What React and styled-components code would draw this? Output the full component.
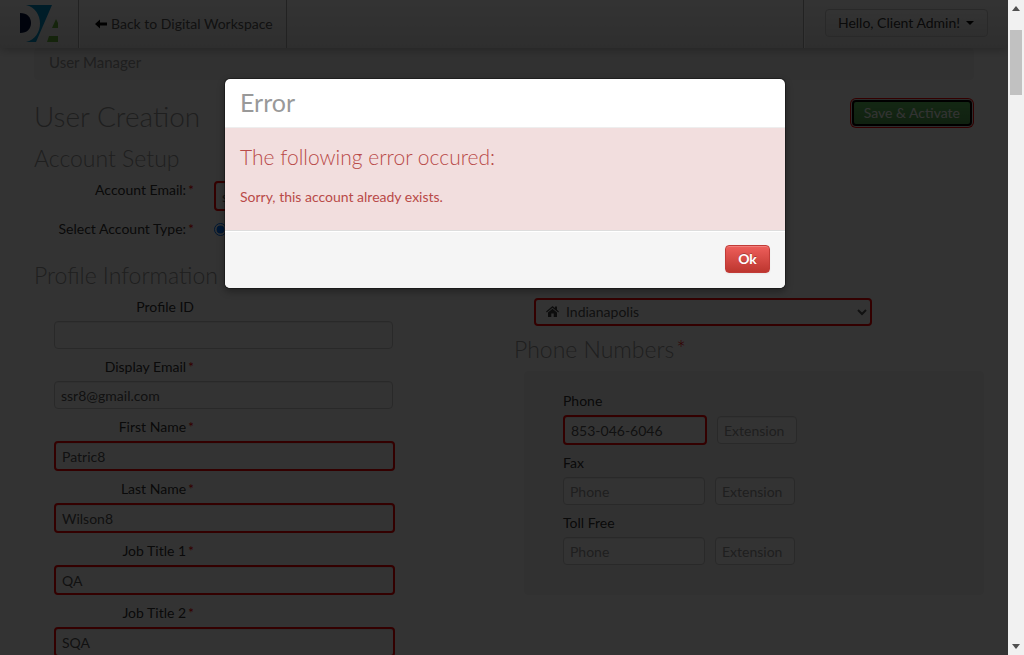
import React from "react";
import styled, { createGlobalStyle, css } from "styled-components";

const GlobalStyle = createGlobalStyle`
  * { box-sizing: border-box; }
  body {
    margin: 0;
    background: #fff;
    color: #333;
    font: 14px/20px Lato, "Liberation Sans", sans-serif;
    overflow: hidden;
  }
  input, select, button { font: inherit; color: inherit; }
  h1, h2, h3, p, ul { margin: 0; padding: 0; }
`;

const Shell = styled.div`
  display: grid;
  grid-template-columns: minmax(0, 1fr) 16px;
  height: 100vh;
`;

const Viewport = styled.div`
  position: relative;
  overflow: hidden;
`;

const ScrollTrack = styled.div`
  display: flex;
  flex-direction: column;
  align-items: center;
  background: #f1f1f1;
  padding: 6px 0;
`;

const ScrollThumb = styled.div`
  width: 12px;
  height: 65px;
  margin: 19px 0 auto;
  background: #c1c1c1;
`;

const ScrollArrow = styled.svg`
  width: 8px;
  height: 5px;
  fill: #505050;
`;

const Navbar = styled.header`
  display: flex;
  align-items: stretch;
  height: 48px;
  background: linear-gradient(#fff, #e6e6e6);
  box-shadow: 0 1px 10px rgba(0, 0, 0, 0.3);
  position: relative;
`;

const Brand = styled.a`
  display: flex;
  padding: 4px 19px;
  width: 78px;
`;

const navDivider = css`
  border-left: 1px solid #aaa;
  box-shadow: inset 1px 0 #fff;
`;

const BackLink = styled.a`
  display: flex;
  align-items: center;
  gap: 4px;
  padding: 0 13px 0 16px;
  color: #555;
  text-decoration: none;
  ${navDivider}
  border-right: 1px solid #aaa;
`;

const UserArea = styled.div`
  display: flex;
  align-items: center;
  margin-left: auto;
  padding: 0 20px 2px 21px;
  ${navDivider}
`;

const UserButton = styled.button`
  display: flex;
  align-items: center;
  gap: 6px;
  height: 28px;
  padding: 0 13px 0 12px;
  color: #333;
  background: linear-gradient(#fff, #e6e6e6);
  border: 1px solid #ccc;
  border-radius: 4px;
`;

const Caret = styled.span`
  border: 4px solid transparent;
  border-top-color: #000;
  border-bottom: 0;
`;

const Page = styled.main`
  max-width: 940px;
  margin: 0 auto;
`;

const Breadcrumb = styled.nav`
  padding: 4px 15px 7px;
  background: #f5f5f5;
  border-radius: 4px;
  a { color: #999; font-size: 15px; text-decoration: none; }
`;

const TitleRow = styled.div`
  display: flex;
  justify-content: space-between;
  align-items: flex-start;
  padding: 16px 2px 3px 0;
`;

const PageTitle = styled.h1`
  font-size: 28px;
  line-height: 40px;
  font-weight: 300;
  color: #999;
`;

const SectionTitle = styled.h2`
  margin-bottom: 3px;
  font-size: 23px;
  line-height: 38px;
  font-weight: 300;
  color: #999;
`;

const Required = styled.span`
  color: #f00;
  margin-left: 2px;
`;

const SaveButton = styled.button`
  height: 26px;
  margin-top: 4px;
  padding: 0 10px;
  color: #fff;
  line-height: 20px;
  background: linear-gradient(#62c462, #51a351);
  border: 2px solid #000;
  border-radius: 4px;
  box-shadow: 0 0 0 1px #ddd, 0 0 0 2px #f00;
`;

const Setup = styled.div`
  display: grid;
  gap: 7px;
  padding-bottom: 5px;
`;

const SetupRow = styled.div`
  display: grid;
  grid-template-columns: 160px 1fr;
  align-items: start;
  column-gap: 20px;
  height: 32px;
  label { text-align: right; }
  input[type="text"] { margin-top: 1px; }
`;

const TextInput = styled.input.attrs({ type: "text" })`
  display: block;
  width: ${(p) => (p.$invalid ? p.$w + 2 : p.$w)}px;
  height: ${(p) => (p.$invalid ? 30 : 28)}px;
  padding: 4px 6px;
  color: #555;
  background: #fff;
  border: ${(p) => (p.$invalid ? "2px solid #f00" : "1px solid #ccc")};
  border-radius: 4px;
  box-shadow: inset 0 1px 1px rgba(0, 0, 0, 0.075);
  &::placeholder { color: #999; opacity: 1; }
`;

const Radio = styled.input`
  width: 13px;
  height: 13px;
  margin: 4px 0 0;
`;

const Columns = styled.div`
  display: grid;
  grid-template-columns: 480px 1fr;
  align-items: start;
`;

const ProfileFields = styled.div`
  padding-left: 20px;
`;

const Field = styled.div`
  margin-bottom: 8px;
  label { display: block; margin-bottom: 4px; }
`;

const ProfileLabel = styled.label`
  width: 140px;
  text-align: right;
`;

const RightColumn = styled.div`
  padding-top: 42px;
`;

const OfficePicker = styled.div`
  position: relative;
  width: 338px;
  margin: 0 0 4px 20px;
  svg { position: absolute; left: 12px; top: 8px; }
`;

const Select = styled.select`
  display: block;
  width: 100%;
  height: 28px;
  padding: 0 0 2px 26px;
  color: #555;
  background: #fff;
  border: 2px solid #f00;
  border-radius: 4px;
`;

const Well = styled.div`
  margin: 0 -10px 0 10px;
  padding: 20px 39px 22px;
  background: #f5f5f5;
  border-radius: 4px;
`;

const PhoneInputs = styled.div`
  display: flex;
  align-items: center;
  gap: 10px;
`;

const Backdrop = styled.div`
  position: absolute;
  inset: 0;
  display: flex;
  justify-content: center;
  align-items: flex-start;
  padding: 78px 0 0 2px;
  background: rgba(0, 0, 0, 0.8);
`;

const Modal = styled.section`
  width: 562px;
  border: 1px solid rgba(0, 0, 0, 0.3);
  border-radius: 6px;
  background: #fff;
  background-clip: padding-box;
  box-shadow: 0 3px 7px rgba(0, 0, 0, 0.3);
  overflow: hidden;
`;

const ModalHeader = styled.header`
  padding: 8px 15px 10px;
  border-bottom: 1px solid #eee;
  h2 { font-size: 25px; line-height: 30px; font-weight: 400; color: #999; }
`;

const ModalBody = styled.div`
  padding: 9px 15px 23px;
  background: #f2dede;
  color: #b94a48;
  h3 { font-size: 21px; line-height: 40px; font-weight: 300; }
  p { margin-top: 10px; }
`;

const ModalFooter = styled.footer`
  display: flex;
  justify-content: flex-end;
  padding: 14px 15px 15px;
  background: #f5f5f5;
  border-top: 1px solid #ddd;
  box-shadow: inset 0 1px 0 #fff;
`;

const OkButton = styled.button`
  height: 28px;
  width: 45px;
  padding: 0;
  color: #fff;
  font-weight: 700;
  text-shadow: 0 -1px 0 rgba(0, 0, 0, 0.25);
  background: linear-gradient(#ee5f5b, #bd362f);
  border: 1px solid #c13b37;
  border-radius: 4px;
  box-shadow: inset 0 1px 0 rgba(255, 255, 255, 0.2), 0 1px 2px rgba(0, 0, 0, 0.05);
`;

const profile = [
  { id: "profileId", label: "Profile ID", value: "" },
  { id: "displayEmail", label: "Display Email", value: "ssr8@gmail.com", required: true },
  { id: "firstName", label: "First Name", value: "Patric8", required: true, invalid: true },
  { id: "lastName", label: "Last Name", value: "Wilson8", required: true, invalid: true },
  { id: "job1", label: "Job Title 1", value: "QA", required: true, invalid: true },
  { id: "job2", label: "Job Title 2", value: "SQA", required: true, invalid: true },
];

const phones = [
  { id: "phone", label: "Phone", value: "853-046-6046", invalid: true },
  { id: "fax", label: "Fax", value: "" },
  { id: "tollFree", label: "Toll Free", value: "" },
];

function Logo() {
  return (
    <svg width="40" height="40" viewBox="0 0 40 40" role="img" aria-label="DA">
      <path d="M1 9C8 9 12 13 12 19S8 29 1 29z" fill="#00103c" />
      <path d="M7 1h26L17 38H7C16 36 21 28 21 19.5S16 3 7 1z" fill="#0090c8" />
      <path d="M37 15l2 4v5h-6z M30 32h9v6H28z" fill="#6ab43c" />
    </svg>
  );
}

function ArrowLeftIcon() {
  return (
    <svg width="12" height="10" viewBox="0 0 12 10" aria-hidden="true">
      <path d="M0 5l5-4.5v3h7v3H5v3z" fill="#000" />
    </svg>
  );
}

function HomeIcon() {
  return (
    <svg width="13" height="11" viewBox="0 0 13 11" aria-hidden="true">
      <path d="M6.5 0L9 2.1V.6h2v3.2l2 1.7-.8.9L6.5 1.7.8 6.4 0 5.5z" fill="#444" />
      <path d="M6.5 2.7l4.5 3.7V11H7.7V7.6H5.3V11H2V6.4z" fill="#444" />
    </svg>
  );
}

export default function App() {
  return (
    <Shell>
      <GlobalStyle />
      <Viewport>
        <Navbar>
          <Brand href="#home"><Logo /></Brand>
          <BackLink href="#workspace"><ArrowLeftIcon />Back to Digital Workspace</BackLink>
          <UserArea>
            <UserButton type="button">Hello, Client Admin! <Caret /></UserButton>
          </UserArea>
        </Navbar>
        <Page>
          <Breadcrumb><a href="#users">User Manager</a></Breadcrumb>
          <TitleRow>
            <PageTitle>User Creation</PageTitle>
            <SaveButton type="button">Save &amp; Activate</SaveButton>
          </TitleRow>
          <SectionTitle>Account Setup</SectionTitle>
          <Setup>
            <SetupRow>
              <label htmlFor="email">Account Email:<Required>*</Required></label>
              <TextInput id="email" $w={339} $invalid defaultValue="ssr8@gmail.com" />
            </SetupRow>
            <SetupRow>
              <label htmlFor="type">Select Account Type:<Required>*</Required></label>
              <Radio id="type" type="radio" defaultChecked />
            </SetupRow>
          </Setup>
          <Columns>
            <div>
              <SectionTitle>Profile Information</SectionTitle>
              <ProfileFields>
                {profile.map((f) => (
                  <Field key={f.id}>
                    <ProfileLabel htmlFor={f.id}>{f.label}{f.required && <Required>*</Required>}</ProfileLabel>
                    <TextInput id={f.id} $w={339} $invalid={f.invalid} defaultValue={f.value} />
                  </Field>
                ))}
              </ProfileFields>
            </div>
            <RightColumn>
              <OfficePicker>
                <Select aria-label="Office" defaultValue="ind"><option value="ind">Indianapolis</option></Select>
                <HomeIcon />
              </OfficePicker>
              <SectionTitle>Phone Numbers<Required>*</Required></SectionTitle>
              <Well>
                {phones.map((f) => (
                  <Field key={f.id}>
                    <label htmlFor={f.id}>{f.label}</label>
                    <PhoneInputs>
                      <TextInput id={f.id} $w={142} $invalid={f.invalid} placeholder="Phone" defaultValue={f.value} />
                      <TextInput aria-label={`${f.label} extension`} $w={80} placeholder="Extension" />
                    </PhoneInputs>
                  </Field>
                ))}
              </Well>
            </RightColumn>
          </Columns>
        </Page>
        <Backdrop>
          <Modal role="dialog" aria-modal="true" aria-labelledby="error-title">
            <ModalHeader><h2 id="error-title">Error</h2></ModalHeader>
            <ModalBody>
              <h3>The following error occured:</h3>
              <p>Sorry, this account already exists.</p>
            </ModalBody>
            <ModalFooter><OkButton type="button">Ok</OkButton></ModalFooter>
          </Modal>
        </Backdrop>
      </Viewport>
      <ScrollTrack aria-hidden="true">
        <ScrollArrow viewBox="0 0 8 5"><path d="M0 5L4 0l4 5z" /></ScrollArrow>
        <ScrollThumb />
        <ScrollArrow viewBox="0 0 8 5"><path d="M0 0h8L4 5z" /></ScrollArrow>
      </ScrollTrack>
    </Shell>
  );
}
